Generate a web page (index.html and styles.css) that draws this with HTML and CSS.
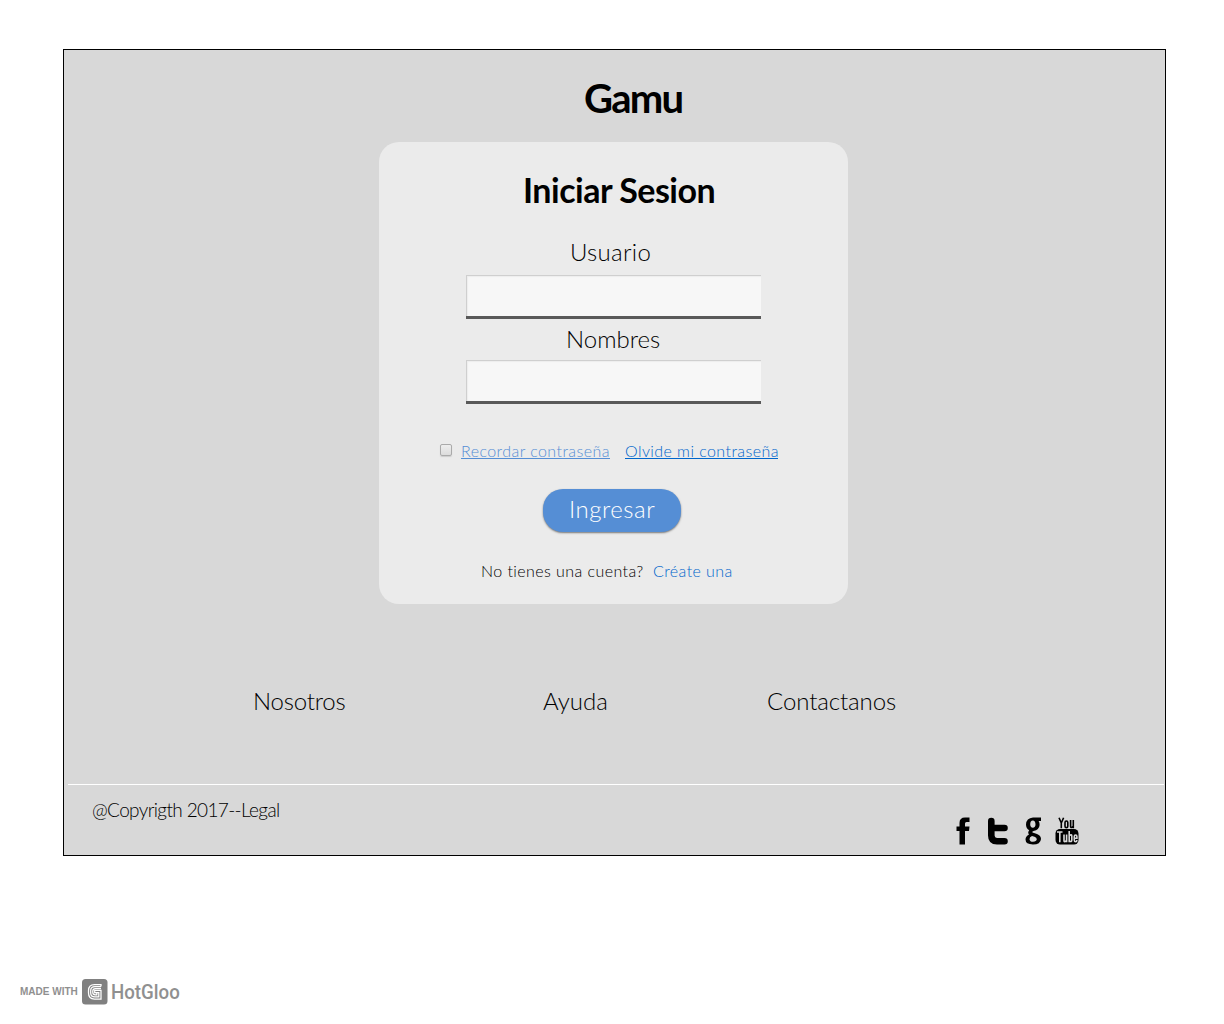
FILE: index.html
```html
<!DOCTYPE html>
<html lang="es">
<head>
<meta charset="utf-8">
<title>Gamu</title>
<link rel="stylesheet" href="styles.css">
</head>
<body>
<main class="board">
  <h1 class="brand">Gamu</h1>
  <form class="card">
    <h2 class="title">Iniciar Sesion</h2>
    <label class="label label-user" for="user">Usuario</label>
    <input class="field" id="user" type="text">
    <label class="label label-name" for="name">Nombres</label>
    <input class="field" id="name" type="text">
    <div class="options">
      <input class="check" type="checkbox" aria-label="Recordar">
      <a class="remember">Recordar contraseña</a>
      <a class="forgot">Olvide mi contraseña</a>
    </div>
    <button class="submit" type="button"><span>Ingresar</span></button>
    <p class="signup"><span class="question">No tienes una cuenta?</span><a class="create">Créate una</a></p>
  </form>
  <nav class="links">
    <a class="about">Nosotros</a>
    <a class="help">Ayuda</a>
    <a class="contact">Contactanos</a>
  </nav>
  <footer class="footer">
    <span class="legal">@Copyrigth 2017--Legal</span>
    <div class="social">
      <svg width="14" height="28" viewBox="0 0 14 28"><path d="M3.500 27.500V14H0.500V9.500H3.500V6Q3.500 0.500 9 0.500H13.500V5H10.500Q9 5 9 6.500V9.500H13.500L13 14H9V27.500Z"/></svg>
      <svg width="22" height="28" viewBox="0 0 22 28"><path d="M4.300 4V18.500Q4.300 24.200 10 24.200H17.500M4.300 11H17.500" fill="none" stroke="#000" stroke-width="6.600" stroke-linecap="round" stroke-linejoin="round"/></svg>
      <svg width="17" height="28" viewBox="0 0 17 28"><path fill-rule="evenodd" d="M16 .5V4H13.600Q14.700 5.700 14.600 8Q14.200 13 8.500 14Q6.500 14.500 7.500 15.500L12 17Q16 18.500 16 22Q15.500 27.500 8 27.500Q.5 27.300 .5 22.500Q.5 19.500 4 17.500Q2.300 15.500 4.200 13.200Q1 11.500 1 7.500Q1.300 1 8 .5ZM7.800 3.500Q5.200 3.700 5.200 7.200Q5.300 10.500 7.800 10.800Q10.500 10.500 10.500 7.200Q10.400 3.700 7.800 3.500ZM7 19Q4.500 20 4.500 22.200Q4.800 24.700 8 24.800Q11.500 24.600 11.800 22.300Q11.700 20.500 9.500 19.800Z"/></svg>
      <svg width="24" height="28" viewBox="0 0 24 28"><rect x=".5" y="12" width="23" height="15.500" rx="4.500"/><g fill="none" stroke="#000" stroke-width="1.600"><path d="M4 .8L6.300 6V11.300M8.600 .8L6.300 6"/><rect x="10" y="4" width="2.800" height="6.600" rx="1.400"/><path d="M15.600 3V9.500Q15.700 11 17 10.300L18.300 9.500M18.300 3V11.300"/></g><g fill="none" stroke="#d8d8d8" stroke-width="1.600"><path d="M2 15H7.500M4.800 15V25.300M9 17.500V23.500Q9 25.300 10.500 24.300L11.600 23.500M11.600 17.500V25.300M14.200 14V25.300M14.200 18.500Q16.800 17 16.800 19V23Q16.800 25.500 14.200 24M19.300 21.200H21.900V19.500Q21.900 18 20.600 18Q19.300 18 19.300 19.500V23Q19.300 24.700 20.600 24.700Q21.900 24.700 21.900 22.900"/></g></svg>
    </div>
  </footer>
</main>
<div class="made">
  <span class="made-with">MADE WITH</span>
  <svg width="26" height="26" viewBox="0 0 26 26"><rect x="0" y="0" width="25.500" height="25.500" rx="3.500" fill="#808080"/><g fill="none" stroke="#fff" stroke-width="1.250"><path d="M19 7.600V5.500H12.500Q6.500 5.500 6.500 11.500V14Q6.500 20 12.500 20H19V11.300H12.700V14.300"/><path d="M19 7.600H13Q8.700 7.600 8.700 11.500V14Q8.700 17.900 13 17.900H16.800V13.500H12.700"/><path d="M19 9.500H13.500Q10.800 9.500 10.800 12V13.500Q10.800 15.900 13.500 15.900H14.800V13.500"/></g></svg>
  <span class="hotgloo">HotGloo</span>
</div>
</body>
</html>
```
FILE: styles.css
```css
* { box-sizing: border-box; }

body {
  margin: 0;
  padding: 49px 0 0 63px;
  background: #fff;
  color: #000;
  font-family: "Coming Soon", Lato, sans-serif;
  font-size: 24px;
  font-weight: 300;
  line-height: 30px;
  white-space: nowrap;
}

.board {
  display: flex;
  flex-direction: column;
  align-items: flex-start;
  width: 1103px;
  height: 807px;
  padding-top: 24px;
  border: 1px solid #000;
  background: #d8d8d8;
}

.brand {
  margin: 0 0 20px 520px;
  font-size: 40px;
  line-height: 48px;
  font-weight: 700;
  letter-spacing: -1.8px;
}

.card {
  display: flex;
  flex-direction: column;
  align-items: flex-start;
  width: 469px;
  height: 462px;
  margin-left: 315px;
  padding-top: 28px;
  border-radius: 20px;
  background: #ebebeb;
}

.title {
  margin: 0 0 27px 144px;
  font-size: 34px;
  line-height: 40px;
  font-weight: 700;
  letter-spacing: -.5px;
}

.label-user {
  margin: 0 0 8px 191px;
  letter-spacing: .3px;
}

.label-name { margin: 5px 0 6px 187px; }

.field {
  width: 295px;
  height: 44px;
  margin: 0 0 0 87px;
  padding: 0 8px;
  border: 0;
  border-bottom: 3px solid #595959;
  border-radius: 0;
  background: #f7f7f7;
  box-shadow: inset 1px 1px #cfcfcf, inset 2px 2px 1px #ededed;
  font: inherit;
  outline: 0;
}

.options {
  display: flex;
  height: 20px;
  margin: 37px 0 28px 61px;
  font-size: 16px;
  line-height: 20px;
  letter-spacing: .43px;
}

.check {
  appearance: none;
  width: 12px;
  height: 12px;
  margin: 3px 9px 0 0;
  border: 1px solid #aaa;
  border-radius: 2px;
  background: linear-gradient(#eee, #dcdcdc);
  box-shadow: 0 1px 1px #ccc;
}

.remember, .forgot {
  height: 18px;
  border-bottom: 1px solid;
}

.remember { width: 149px; margin-right: 15px; color: #558ed5; }
.forgot { width: 153px; color: #0066cc; }

.submit {
  width: 138px;
  height: 43px;
  margin-left: 164px;
  padding: 0 0 3px 26px;
  border: 0;
  border-radius: 20px;
  background: #558ed5;
  box-shadow: 0 1px 2px #777;
  color: #fff;
  font: inherit;
  line-height: 40px;
  letter-spacing: .5px;
  text-align: left;
}

.signup {
  display: flex;
  margin: 29px 0 0 102px;
  font-size: 16px;
  line-height: 20px;
  letter-spacing: .43px;
}

.question { width: 172px; }
.create { color: #0066cc; }

.links {
  display: flex;
  margin: 82px 0 68px 189px;
}

.about { width: 290px; letter-spacing: -.2px; }
.help { width: 224px; }
.contact { letter-spacing: -.1px; }

.footer {
  display: flex;
  width: 1096px;
  height: 71px;
  margin-left: 4px;
  border-top: 1px solid #fff;
}

.legal {
  width: 888px;
  padding: 13px 0 0 24px;
  font-size: 19px;
  line-height: 24px;
  letter-spacing: -.63px;
}

.social {
  display: flex;
  padding-top: 32px;
}

.social svg { margin-right: 17px; }
.social svg:nth-child(2) { margin-right: 16px; }
.social svg:nth-child(3) { margin-right: 13px; }

.made {
  display: flex;
  align-items: center;
  height: 26px;
  margin: 123px 0 0 -43px;
  color: #909090;
}

.made-with {
  width: 62px;
  font: 700 10px/26px "Liberation Sans", Arial, sans-serif;
}

.hotgloo {
  margin-left: 3px;
  font: 500 21px/26px Roboto, sans-serif;
  transform: scaleX(.89);
  transform-origin: left;
}
```
